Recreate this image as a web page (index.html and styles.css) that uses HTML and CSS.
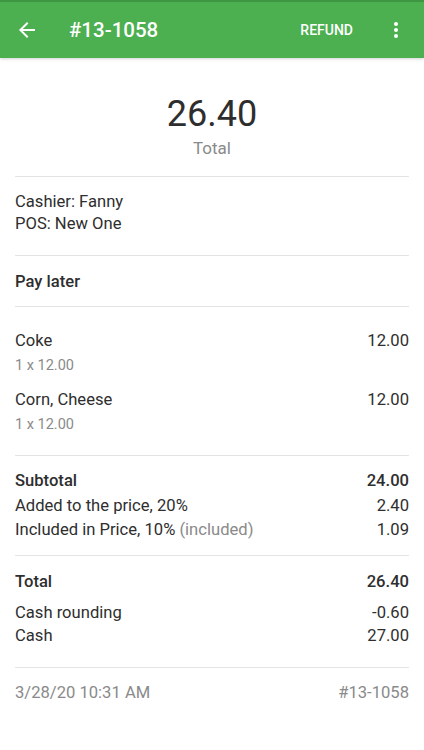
FILE: index.html
```html
<!DOCTYPE html>
<html lang="en">
<head>
    <meta charset="UTF-8">
    <meta name="viewport" content="width=device-width, initial-scale=1.0">
    <title>Receipt #13-1058</title>
    <link rel="stylesheet" href="styles.css">
</head>
<body>
    <div class="topbar">
        <a href="#" class="back">
            <svg width="24" height="24" viewBox="0 0 24 24"><path fill="#fff" d="M20 11H7.83l5.59-5.59L12 4l-8 8 8 8 1.41-1.41L7.83 13H20v-2z"/></svg>
        </a>
        <div class="title">#13-1058</div>
        <a href="#" class="refund">REFUND</a>
        <a href="#" class="more">
            <span></span><span></span><span></span>
        </a>
    </div>

    <div class="receipt">
        <div class="total-box">
            <div class="big">26.40</div>
            <div class="caption">Total</div>
        </div>

        <div class="section info">
            <div>Cashier: Fanny</div>
            <div>POS: New One</div>
        </div>

        <div class="section pay">
            <b>Pay later</b>
        </div>

        <div class="section items">
            <div class="item">
                <div class="row"><span>Coke</span><span>12.00</span></div>
                <div class="sub">1 x 12.00</div>
            </div>
            <div class="item">
                <div class="row"><span>Corn, Cheese</span><span>12.00</span></div>
                <div class="sub">1 x 12.00</div>
            </div>
        </div>

        <div class="section sums">
            <div class="row strong"><span>Subtotal</span><span>24.00</span></div>
            <div class="row"><span>Added to the price, 20%</span><span>2.40</span></div>
            <div class="row"><span>Included in Price, 10% <i class="muted">(included)</i></span><span>1.09</span></div>
        </div>

        <div class="section payments">
            <div class="row strong grand"><span>Total</span><span>26.40</span></div>
            <div class="row"><span>Cash rounding</span><span>-0.60</span></div>
            <div class="row"><span>Cash</span><span>27.00</span></div>
        </div>

        <div class="section footer">
            <div class="row muted"><span>3/28/20 10:31 AM</span><span>#13-1058</span></div>
        </div>
    </div>
</body>
</html>
```
FILE: styles.css
```css
body{
    margin: 0;
    font-family: Roboto, "Noto Sans", sans-serif;
    background-color: #fff;
    color: #2e2e2e;
}

.topbar{
    background-color: #4caf50;
    border-top: 2px solid #3e9642;
    height: 56px;
    display: flex;
    align-items: center;
    box-shadow: 0 1px 3px rgba(0, 0, 0, 0.18);
    color: #fff;
}

.topbar a{
    color: #fff;
    text-decoration: none;
}

.back{
    display: flex;
    margin-left: 15px;
}

.title{
    flex: 1;
    margin-left: 30px;
    font-size: 20.5px;
    font-weight: 500;
    line-height: 24px;
}

.refund{
    font-size: 14px;
    font-weight: 500;
    line-height: 20px;
}

.more{
    display: flex;
    flex-direction: column;
    gap: 2px;
    margin-left: 41px;
    margin-right: 26px;
}

.more span{
    width: 4px;
    height: 4px;
    border-radius: 50%;
    background-color: #fff;
}

.receipt{
    padding: 0 15px;
}

.total-box{
    text-align: center;
    padding-top: 35px;
    padding-bottom: 17px;
    border-bottom: 1px solid #e4e4e4;
}

.big{
    font-size: 36px;
    line-height: 42px;
}

.caption{
    font-size: 17px;
    line-height: 22px;
    margin-top: 2px;
    color: #8a8a8a;
}

.section{
    font-size: 16.6px;
    border-bottom: 1px solid #e4e4e4;
}

.info{
    line-height: 22px;
    padding: 14px 0 20px;
}

.pay{
    line-height: 22px;
    padding: 15px 0 13px;
}

.pay b{
    font-weight: 500;
}

.row{
    display: flex;
    justify-content: space-between;
}

.items{
    padding: 23px 0 20px;
    line-height: 22px;
}

.item + .item{
    margin-top: 13px;
}

.sub{
    font-size: 14.5px;
    line-height: 20px;
    margin-top: 4px;
    color: #8a8a8a;
}

.sums{
    padding: 13px 0 12px;
    line-height: 24.5px;
}

.strong{
    font-weight: 500;
}

.muted{
    color: #8a8a8a;
    font-style: normal;
}

.payments{
    padding: 14px 0 20px;
    line-height: 23px;
}

.grand{
    line-height: 24px;
    margin-bottom: 7px;
}

.footer{
    border-bottom: 0;
    padding-top: 14px;
    line-height: 22px;
}
```
